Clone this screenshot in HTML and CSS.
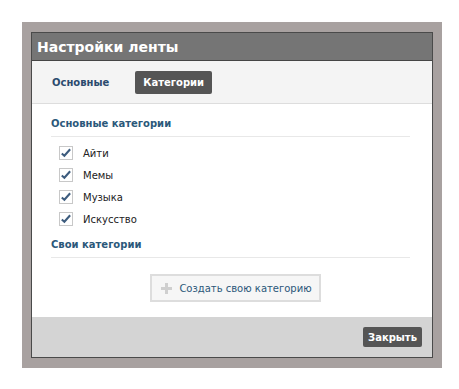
FILE: index.html
```html
<!DOCTYPE html>
<html lang="ru">
<head>
    <meta charset="utf-8">
    <title>Настройки ленты</title>
    <link rel="stylesheet" href="styles.css">
</head>
<body>
    <div class="frame">
        <div class="dialog">
            <h1 class="dialog-title">Настройки ленты</h1>
            <div class="tabs">
                <span class="tab">Основные</span>
                <span class="tab tab-active">Категории</span>
            </div>
            <div class="dialog-body">
                <h2 class="section-title">Основные категории</h2>
                <ul class="checks">
                    <li><span class="box"><svg width="14" height="14" viewBox="0 0 14 14"><path d="M3 7.5 L5.8 10 L12 3" fill="none" stroke="#3d5c7e" stroke-width="2.2"/></svg></span>Айти</li>
                    <li><span class="box"><svg width="14" height="14" viewBox="0 0 14 14"><path d="M3 7.5 L5.8 10 L12 3" fill="none" stroke="#3d5c7e" stroke-width="2.2"/></svg></span>Мемы</li>
                    <li><span class="box"><svg width="14" height="14" viewBox="0 0 14 14"><path d="M3 7.5 L5.8 10 L12 3" fill="none" stroke="#3d5c7e" stroke-width="2.2"/></svg></span>Музыка</li>
                    <li><span class="box"><svg width="14" height="14" viewBox="0 0 14 14"><path d="M3 7.5 L5.8 10 L12 3" fill="none" stroke="#3d5c7e" stroke-width="2.2"/></svg></span>Искусство</li>
                </ul>
                <h2 class="section-title">Свои категории</h2>
                <div class="create-row">
                    <button class="create-button"><svg width="11" height="11" viewBox="0 0 11 11"><path d="M4 0h3v4h4v3h-4v4h-3v-4h-4v-3h4z" fill="#cfcfcf"/></svg>Создать свою категорию</button>
                </div>
            </div>
            <div class="dialog-footer">
                <button class="close-button">Закрыть</button>
            </div>
        </div>
    </div>
</body>
</html>
```

FILE: styles.css
```css
body {
    background-color: #FFF;
    font-family: "DejaVu Sans", Verdana, sans-serif;
    font-size: 10px;
    margin: 0;
}
.frame {
    background-color: #A8A1A0;
    margin: 22px 0 0 22px;
    padding: 10px 9px;
    width: 420px;
    box-sizing: border-box;
}
.dialog {
    background-color: #FFF;
    border: 1px solid #4A4A4A;
}
.dialog-title {
    background-color: #757575;
    border-bottom: 1px solid #454545;
    color: #FFF;
    font-size: 14px;
    font-weight: bold;
    height: 28px;
    line-height: 28px;
    margin: 0;
    padding: 0 5px;
    box-sizing: border-box;
}
.tabs {
    align-items: center;
    background-color: #F4F4F4;
    border-bottom: 1px solid #DDD;
    display: flex;
    gap: 18px;
    height: 43px;
    padding: 0 0 0 12px;
    box-sizing: border-box;
}
.tab {
    border-radius: 2px;
    color: #2B4B6E;
    font-weight: bold;
    line-height: 23px;
    padding: 0 8px;
}
.tab-active {
    background-color: #555;
    color: #FFF;
}
.dialog-body {
    padding: 12px 22px 15px 19px;
}
.section-title {
    border-bottom: 1px solid #E8E8E8;
    color: #2B587A;
    font-size: 10px;
    font-weight: bold;
    line-height: 16px;
    margin: 0;
    padding: 0 0 4px;
}
.checks {
    list-style: none;
    margin: 5px 0 7px;
    padding: 0 0 0 8px;
}
.checks li {
    align-items: center;
    color: #222;
    display: flex;
    height: 22px;
}
.box {
    background-color: #FFF;
    border: 1px solid #C8C8C8;
    display: flex;
    height: 14px;
    margin-right: 10px;
    width: 14px;
    box-sizing: border-box;
    overflow: visible;
}
.box svg {
    margin: -1px 0 0 -1px;
}
.create-row {
    display: flex;
    justify-content: center;
    padding: 16px 0 0;
}
.create-button {
    align-items: center;
    background-color: #F6F6F6;
    border: 2px solid #DDD;
    color: #2B587A;
    display: flex;
    font: inherit;
    gap: 7px;
    height: 28px;
    margin-left: 10px;
    padding: 0 7px 0 9px;
}
.dialog-footer {
    background-color: #D4D4D4;
    display: flex;
    justify-content: flex-end;
    padding: 10px 10px 10px;
}
.close-button {
    background-color: #555;
    border: none;
    border-radius: 2px;
    color: #FFF;
    font: inherit;
    font-weight: bold;
    height: 20px;
    padding: 0 5px;
}
```
